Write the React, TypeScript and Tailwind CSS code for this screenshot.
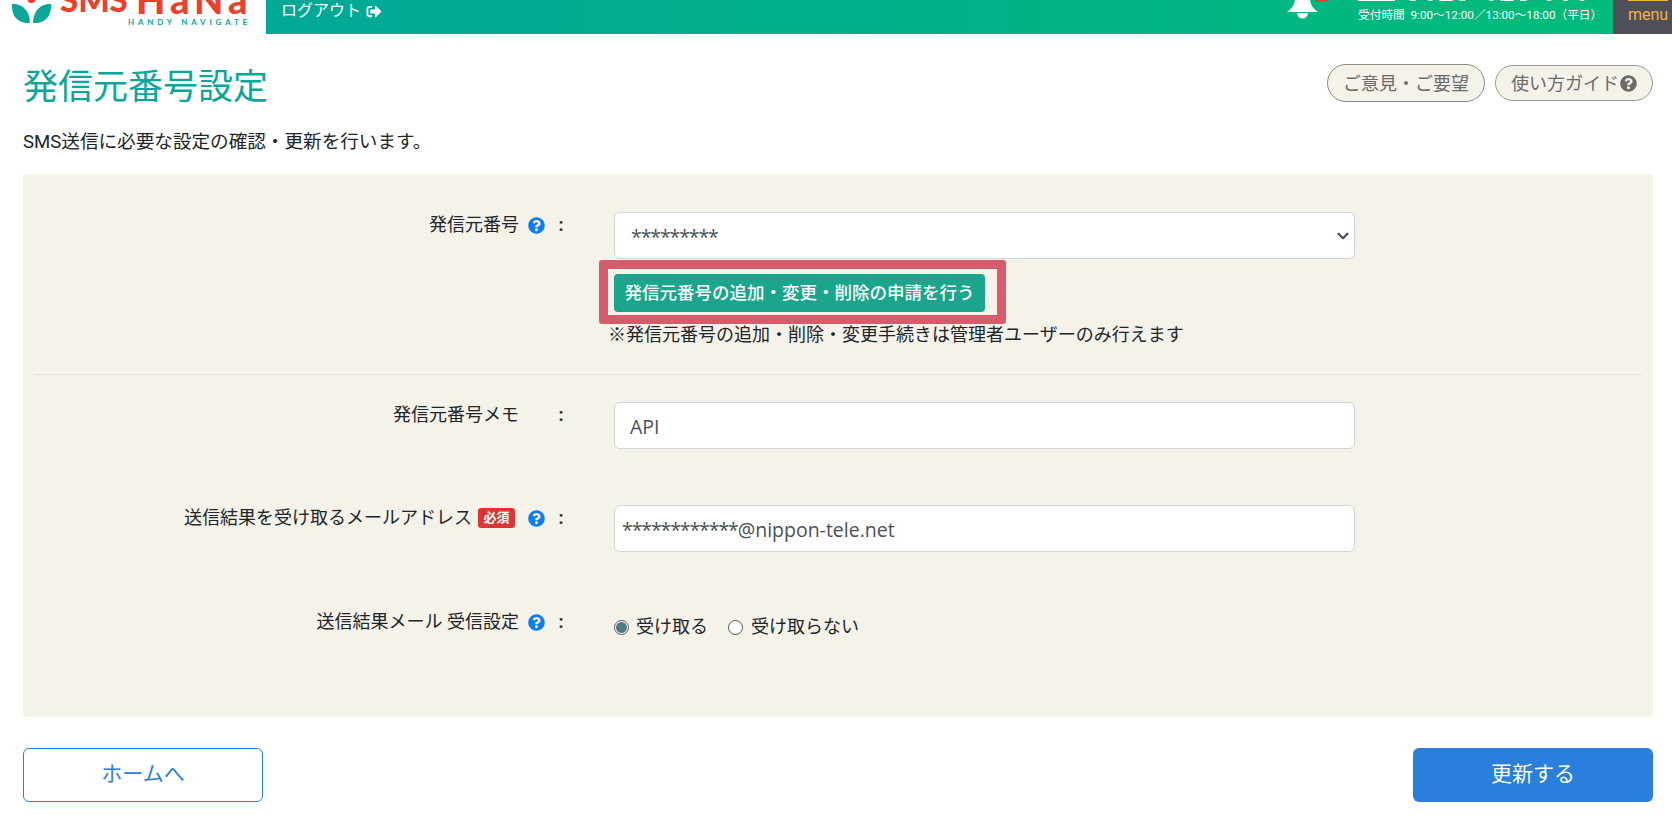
import { ChevronDown } from "lucide-react";
import { FaQuestionCircle, FaSignOutAlt } from "react-icons/fa";

const jp = "font-['Roboto','Noto_Sans_CJK_JP',sans-serif]";

function Label({ children }: { children: React.ReactNode }) {
  return (
    <div className="flex w-[534px] shrink-0 items-start justify-end gap-[9px] pt-[1px] text-[18px] leading-[24px] text-[#212529]">
      {children}
      <span className="w-[14px] text-center font-bold">:</span>
    </div>
  );
}

function Help() {
  return <FaQuestionCircle className="mt-[4px] h-[17px] w-[17px] shrink-0 text-[#0d7bf2]" />;
}

function Logo() {
  return (
    <div className="relative h-[34px] w-[266px] shrink-0 overflow-hidden bg-white">
      <svg viewBox="0 0 64 34" className="absolute top-0 left-0 h-[34px] w-[64px]">
        <path d="M12 4C20 3 30 9 30 23 19 24 11 17 12 4Z" fill="#0ba69a" />
        <path d="M51 4C43 3 33 9 33 23 44 24 52 17 51 4Z" fill="#0ba69a" />
        <circle cx="31.500" cy="-1" r="4" fill="#ee3f2c" />
      </svg>
      <span className="absolute top-[-21px] left-[60px] text-[33px] leading-[40px] font-black text-[#ee3f2c] font-['Lato',sans-serif]">SMS</span>
      <span className="absolute top-[-24px] left-[136px] text-[38px] leading-[46px] font-black tracking-[5px] text-[#ee3f2c] font-['Lato',sans-serif]">HaNa</span>
      <span className="absolute top-[17px] left-[128px] text-[8px] leading-[10px] font-bold tracking-[3.8px] whitespace-nowrap text-[#0ba69a] font-['Lato',sans-serif]">HANDY NAVIGATE</span>
    </div>
  );
}

function Field({ children, className = "" }: { children: React.ReactNode; className?: string }) {
  return (
    <div className={"flex h-[47px] w-[741px] items-center rounded-[6px] border border-[#ced4da] bg-white pt-[2px] text-[19.500px] text-[#495057] font-['Open_Sans',sans-serif] " + className}>
      {children}
    </div>
  );
}

export default function App() {
  return (
    <div className={"h-[814px] overflow-hidden bg-white " + jp}>
      <header className="flex h-[34px] overflow-hidden">
        <Logo />
        <div className="flex flex-1 items-start justify-between bg-gradient-to-r from-[#00a896] to-[#00bc78] pl-[15px]">
          <div className="flex items-center gap-[5px] pt-[1px] text-[16px] leading-[20px] text-white">
            ログアウト
            <FaSignOutAlt className="h-[15px] w-[16px]" />
          </div>
          <div className="flex h-full items-start">
            <div className="relative h-[34px] w-[41px]">
              <svg viewBox="0 0 31 34" className="h-[34px] w-[31px]" fill="#fff">
                <path d="M8 -2h15c0 7 3 10 8 14H0c5-4 8-7 8-14Z" />
                <path d="M10 13h11a5.500 5.500 0 0 1-11 0Z" />
              </svg>
              <span className="absolute top-0 left-[28px] h-[2px] w-[13px] bg-[#e0433a]" />
            </div>
            <div className="relative ml-[30px] w-[255px]">
              <span className="absolute top-0 left-0 h-[1px] w-[37px] bg-white" />
              <div className="absolute top-[-20px] left-[47px] text-[27px] leading-[24px] font-bold tracking-[1px] whitespace-nowrap text-white">0120-123-777</div>
              <div className="pt-[7px] text-[11.700px] leading-[16px] whitespace-nowrap text-white">受付時間 &nbsp;9:00〜12:00／13:00〜18:00（平日）</div>
            </div>
            <div className="relative h-[34px] w-[59px] bg-[#50505a]">
              <span className="absolute top-0 left-[15px] h-[1px] w-[40px] bg-[#f7b538]" />
              <span className="absolute top-[6px] left-[15px] text-[16px] leading-[18px] text-[#f7b538]">menu</span>
            </div>
          </div>
        </div>
      </header>

      <main className="pr-[19px] pl-[23px]">
        <div className="flex items-start justify-between pt-[30px]">
          <h1 className="text-[35px] leading-[48px] text-[#0ba69a]">発信元番号設定</h1>
          <div className="flex items-center gap-[10px] text-[18px] text-[#6b6b6b]">
            <span className="flex h-[38px] w-[158px] items-center justify-center rounded-full border border-[#8a8a8a] bg-[#f5f2ea]">ご意見・ご要望</span>
            <span className="flex h-[36px] w-[158px] items-center justify-center gap-[1px] rounded-full border border-[#9a9a9a] bg-[#f5f2ea]">
              使い方ガイド
              <FaQuestionCircle className="h-[17px] w-[17px]" />
            </span>
          </div>
        </div>
        <p className="mt-[18px] text-[18.600px] leading-[24px] text-[#212529]">SMS送信に必要な設定の確認・更新を行います。</p>

        <section className="mt-[20px] h-[543px] rounded-[3px] bg-[#f5f2ea] px-[11px] pt-[38px]">
          <div className="flex items-start">
            <Label>
              発信元番号
              <Help />
            </Label>
            <div className="ml-[46px] w-[741px]">
              <Field className="relative pl-[16px]">
                <span className="tracking-[-1.100px]">*********</span>
                <ChevronDown className="absolute top-[14px] right-[2px] h-[18px] w-[18px] stroke-[3] text-[#495057]" />
              </Field>
              <div className="mt-[1px] ml-[-15px] w-[407px] rounded-[3px] border-[9px] border-[#d65c6c] pt-[5px] pr-[12px] pb-[3px] pl-[6px]">
                <button className="h-[38px] w-full rounded-[4px] bg-[#1aa58c] text-[17.500px] font-medium whitespace-nowrap text-white">発信元番号の追加・変更・削除の申請を行う</button>
              </div>
              <p className="mt-[1px] ml-[-6px] text-[18px] leading-[20px] whitespace-nowrap text-[#212529]">※発信元番号の追加・削除・変更手続きは管理者ユーザーのみ行えます</p>
            </div>
          </div>
          <div className="mt-[29px] border-t border-[#e2e2e4]" />

          <div className="mt-[27px] flex items-start">
            <Label>
              発信元番号メモ
              <span className="w-[17px]" />
            </Label>
            <Field className="ml-[46px] pl-[15px]">API</Field>
          </div>

          <div className="mt-[56px] flex items-start">
            <Label>
              <span className="flex items-center gap-[6px]">
                送信結果を受け取るメールアドレス
                <span className="mr-[4px] w-[37px] rounded-[3px] bg-[#dc3535] text-center text-[13px] leading-[20px] font-bold text-white">必須</span>
              </span>
              <Help />
            </Label>
            <Field className="ml-[46px] pl-[7px]">
              <span className="tracking-[-1.100px]">************</span>
              @nippon-tele.net
            </Field>
          </div>

          <div className="mt-[57px] flex items-start">
            <Label>
              送信結果メール 受信設定
              <Help />
            </Label>
            <div className="ml-[46px] flex items-center pt-[6px] text-[18px] leading-[24px] text-[#212529]">
              <span className="flex h-[15px] w-[15px] items-center justify-center rounded-full border border-[#555] bg-white">
                <span className="h-[11px] w-[11px] rounded-full bg-[#4f7a86]" />
              </span>
              <span className="ml-[7px]">受け取る</span>
              <span className="ml-[20px] h-[15px] w-[15px] rounded-full border border-[#555] bg-white" />
              <span className="ml-[8px]">受け取らない</span>
            </div>
          </div>
        </section>

        <div className="mt-[31px] flex justify-between">
          <button className="h-[54px] w-[240px] rounded-[6px] border border-[#2a7fdc] bg-white text-[21px] text-[#2a7fdc]">ホームへ</button>
          <button className="h-[54px] w-[240px] rounded-[6px] bg-[#2a7fdc] text-[21px] text-white">更新する</button>
        </div>
      </main>
    </div>
  );
}
